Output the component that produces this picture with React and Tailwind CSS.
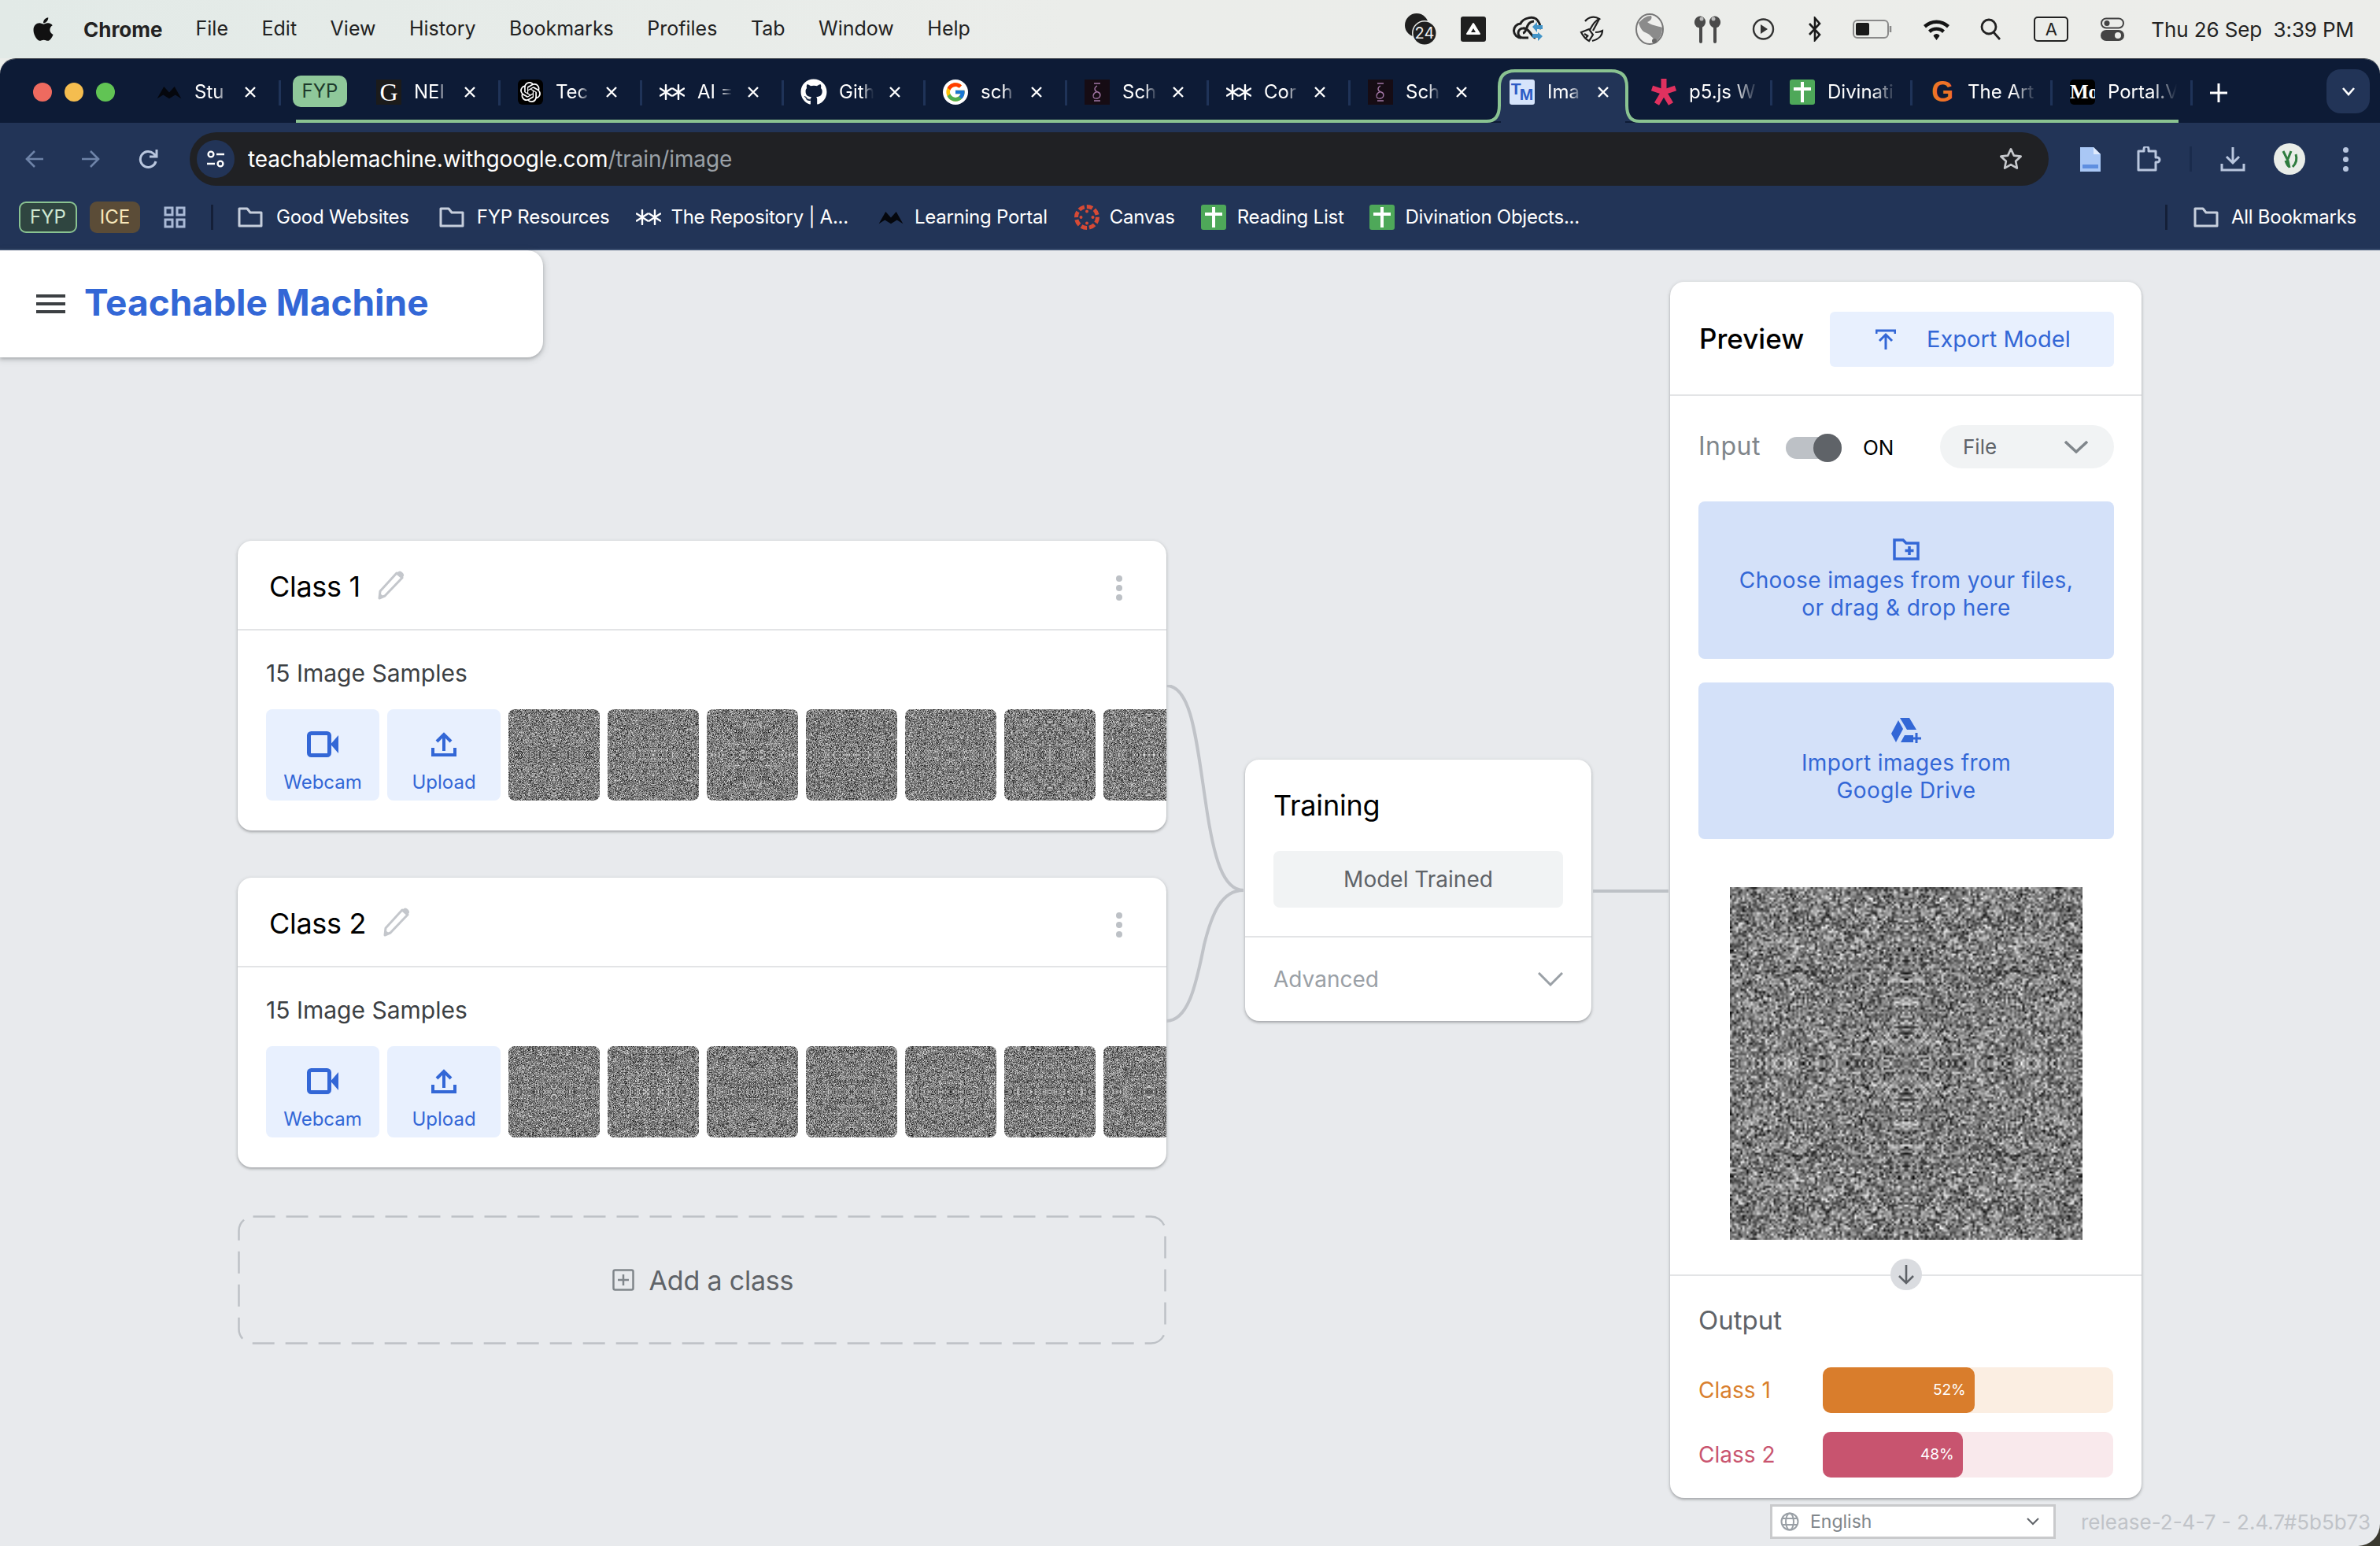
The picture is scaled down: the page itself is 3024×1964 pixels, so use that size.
import React, { useEffect, useRef } from 'react';
import { FaApple, FaGithub } from 'react-icons/fa';
import { FcGoogle } from 'react-icons/fc';
import { SiOpenai } from 'react-icons/si';

function rng(seed) {
  let a = seed >>> 0;
  return () => {
    a = (a + 0x6d2b79f5) >>> 0;
    let t = a;
    t = Math.imul(t ^ (t >>> 15), t | 1);
    t ^= t + Math.imul(t ^ (t >>> 7), t | 61);
    return ((t ^ (t >>> 14)) >>> 0) / 4294967296;
  };
}

function Noise({ seed, res, amp, className }) {
  const ref = useRef(null);
  useEffect(() => {
    const c = ref.current;
    const ctx = c.getContext('2d');
    const img = ctx.createImageData(res, res);
    const r = rng(seed);
    const half = Math.ceil(res / 2);
    const vals = [];
    for (let y = 0; y < half; y++) {
      vals[y] = [];
      for (let x = 0; x < half; x++) {
        vals[y][x] = 126 + (r() + r() - 1) * amp;
      }
    }
    for (let y = 0; y < res; y++) {
      for (let x = 0; x < res; x++) {
        const yy = y < half ? y : res - 1 - y;
        const xx = x < half ? x : res - 1 - x;
        const v = vals[yy][xx];
        const i = (y * res + x) * 4;
        img.data[i] = v;
        img.data[i + 1] = v;
        img.data[i + 2] = v;
        img.data[i + 3] = 255;
      }
    }
    ctx.putImageData(img, 0, 0);
  }, [seed, res, amp]);
  return <canvas ref={ref} width={res} height={res} className={className} />;
}

const Stars = ({ w = 32, c = 'white' }) => (
  <svg width={w} height={w * 0.625} viewBox="0 0 32 20" stroke={c} strokeWidth="2.4" strokeLinecap="round">
    <path d="M8 1v18M1 5.500l14 9M1 14.500l14-9" />
    <path d="M24 1v18M17 5.500l14 9M17 14.500l14-9" />
  </svg>
);
const Mountain = ({ w = 32 }) => (
  <svg width={w} height={w * 0.6} viewBox="0 0 32 20" fill="#05070d">
    <path d="M0 19 L9 3 L16 11 L23 3 L32 19 L24 14 L16 19 L8 14 Z" />
  </svg>
);
const GIcon = () => (
  <div className="w-[32px] h-[32px] bg-[#1b1b1b] flex items-center justify-center text-white text-[32px] leading-none font-['Liberation_Serif',serif]">G</div>
);
const Gpt = () => (
  <div className="w-[32px] h-[32px] rounded-[6px] bg-black flex items-center justify-center text-white"><SiOpenai size={26} /></div>
);
const Sch = () => (
  <svg width="32" height="32" viewBox="0 0 32 32">
    <rect width="32" height="32" fill="#160c14" />
    <path d="M12 5h8M16 8c-5 3-3 7 1 8s4 7-1 8-6-3-4-6 7-3 8 1M12 27h8" fill="none" stroke="#a377a6" strokeWidth="1.4" />
  </svg>
);
const Tm = () => (
  <div className="w-[32px] h-[32px] rounded-[3px] bg-[#d6e4fb] flex items-start justify-center overflow-hidden text-[#2d5bc4] font-bold font-['Liberation_Sans',sans-serif] leading-none">
    <span className="text-[21px] mt-[1px]">T</span><span className="text-[21px] mt-[8px] -ml-[2px]">M</span>
  </div>
);
const P5 = () => (
  <svg width="32" height="36" viewBox="0 0 32 36" stroke="#e0315f" strokeWidth="7">
    <path d="M16 1v17M16 18L1 13M16 18L31 13M16 18L7 33M16 18L25 33" />
  </svg>
);
const GreenDoc = () => (
  <svg width="32" height="32" viewBox="0 0 32 32">
    <rect width="32" height="32" rx="3" fill="#4ea859" />
    <path d="M16 3v26M5 12h22" stroke="white" strokeWidth="4" />
  </svg>
);
const OrangeG = () => (
  <div className="w-[32px] h-[32px] flex items-center justify-center text-[#ee7326] text-[36px] font-extrabold leading-none font-['Liberation_Sans',sans-serif]">G</div>
);
const Mo = () => (
  <div className="w-[32px] h-[32px] rounded-[5px] bg-black overflow-hidden text-white text-[25px] font-bold leading-[32px] font-['Liberation_Serif',serif] whitespace-nowrap">Mo</div>
);
const CanvasIcon = () => (
  <svg width="32" height="32" viewBox="0 0 32 32" fill="#d64a35">
    <circle cx="16" cy="16" r="13.500" fill="none" stroke="#d64a35" strokeWidth="5" strokeDasharray="7.500 3" />
    <circle cx="16" cy="8.500" r="2" /><circle cx="23.500" cy="16" r="2" /><circle cx="16" cy="23.500" r="2" /><circle cx="8.500" cy="16" r="2" />
  </svg>
);
const Folder = () => (
  <svg width="32" height="26" viewBox="0 0 32 26" fill="none" stroke="#c6cedc" strokeWidth="3">
    <path d="M2 24V2h10l4 5h14v17z" strokeLinejoin="round" />
  </svg>
);

function X() {
  return <span className="ml-[16px] w-[22px] flex justify-center">
    <svg width="16" height="16" viewBox="0 0 16 16" stroke="white" strokeWidth="2.4"><path d="M2 2l12 12M14 2L2 14" /></svg>
  </span>;
}

function Tab({ icon, text, w = 'w-[180px]', tw = 'w-[44px]', close = true, sep = true, active = false }) {
  return (
    <div className={`${w} h-[81px] shrink-0 relative flex items-center pt-[3px]`}>
      {active && (
        <svg className="absolute left-[-11px] top-[13px]" width="202" height="68" viewBox="0 0 202 68">
          <path d="M0 66 H4 Q20 66 20 46 V22 Q20 2 40 2 H162 Q182 2 182 22 V46 Q182 66 198 66 H202" fill="#223457" stroke="#8ac391" strokeWidth="4" />
          <rect x="22" y="62" width="158" height="6" fill="#223457" />
        </svg>
      )}
      <span className="relative ml-[22px] w-[32px] h-[36px] flex items-center justify-center shrink-0">{icon}</span>
      <span className={`relative ml-[16px] ${tw} overflow-hidden whitespace-nowrap text-white text-[24px] [mask-image:linear-gradient(to_right,black_65%,transparent)]`}>{text}</span>
      {close && <span className="relative flex"><X /></span>}
      {sep && <span className="absolute right-0 top-[27px] w-[3px] h-[32px] bg-[#1f3358]" />}
    </div>
  );
}

function TabStrip() {
  return (
    <div className="h-[81px] bg-[#0d1b36] flex relative">
      <div className="w-[177px] shrink-0 flex items-center pl-[42px] gap-[16px] pt-[3px]">
        <span className="w-[24px] h-[24px] rounded-full bg-[#ee6a5f]" />
        <span className="w-[24px] h-[24px] rounded-full bg-[#f5bd4f]" />
        <span className="w-[24px] h-[24px] rounded-full bg-[#61c454]" />
      </div>
      <Tab icon={<Mountain />} text="Stu" />
      <div className="ml-[15px] mr-[15px] mt-[21px] w-[69px] h-[40px] rounded-[10px] bg-[#8fc89a] flex items-center justify-center text-[#1d3a2b] text-[24px]">FYP</div>
      <Tab icon={<GIcon />} text="NEI" />
      <Tab icon={<Gpt />} text="Tec" />
      <Tab icon={<Stars />} text="AI =" />
      <Tab icon={<span className="text-white"><FaGithub size={34} /></span>} text="Gith" />
      <Tab icon={<span className="w-[32px] h-[32px] rounded-full bg-white flex items-center justify-center"><FcGoogle size={28} /></span>} text="sch" />
      <Tab icon={<Sch />} text="Sch" />
      <Tab icon={<Stars />} text="Cor" />
      <Tab icon={<Sch />} text="Sch" sep={false} />
      <Tab icon={<Tm />} text="Ima" sep={false} active />
      <Tab icon={<P5 />} text="p5.js W" w="w-[176px]" tw="w-[88px]" close={false} />
      <Tab icon={<GreenDoc />} text="Divinati" w="w-[178px]" tw="w-[88px]" close={false} />
      <Tab icon={<OrangeG />} text="The Art" w="w-[178px]" tw="w-[88px]" close={false} />
      <Tab icon={<Mo />} text="Portal.V" w="w-[178px]" tw="w-[88px]" close={false} />
      <svg className="ml-[22px] mt-[29px]" width="22" height="28" viewBox="0 0 22 28" stroke="white" strokeWidth="3"><path d="M11 2v24M0 14h22" /></svg>
      <div className="ml-[126px] mt-[13px] w-[55px] h-[56px] rounded-[18px] bg-[#223457] flex items-center justify-center">
        <svg width="18" height="12" viewBox="0 0 18 12" fill="none" stroke="white" strokeWidth="2.6"><path d="M2 2l7 8 7-8" /></svg>
      </div>
      <div className="absolute left-[376px] w-[1509px] bottom-0 h-[4px] bg-[#8ac391]" />
      <div className="absolute left-[2087px] w-[681px] bottom-0 h-[4px] bg-[#8ac391]" />
    </div>
  );
}

function Toolbar() {
  return (
    <div className="h-[80px] bg-[#223457] flex items-start pt-[12px]">
      <div className="w-[241px] h-[68px] shrink-0 flex items-center pl-[32px]">
        <svg width="24" height="24" viewBox="0 0 24 24" fill="none" stroke="#6e83a8" strokeWidth="2.6"><path d="M23 12H3M12 2L2 12l10 10" /></svg>
        <svg className="ml-[47px]" width="24" height="24" viewBox="0 0 24 24" fill="none" stroke="#6e83a8" strokeWidth="2.6"><path d="M1 12h20M12 2l10 10-10 10" /></svg>
        <svg className="ml-[49px]" width="26" height="28" viewBox="0 0 26 28" fill="none" stroke="#b9c6de" strokeWidth="3"><path d="M22 17a10 10 0 1 1-3-10l4 4M23 2v9h-9" /></svg>
      </div>
      <div className="w-[2362px] h-[68px] shrink-0 rounded-full bg-[#202124] flex items-center pl-[9px]">
        <span className="w-[48px] h-[48px] rounded-full bg-[#223457] flex items-center justify-center">
          <svg width="26" height="26" viewBox="0 0 26 26" fill="none" stroke="white" strokeWidth="2.4"><circle cx="7" cy="7" r="3.4" /><path d="M14 7h10M2 19h10" /><circle cx="19" cy="19" r="3.4" /></svg>
        </span>
        <span className="ml-[17px] text-white text-[28px] tracking-[-0.15px] whitespace-nowrap">teachablemachine.withgoogle.com<span className="text-[#9aa0a6]">/train/image</span></span>
        <svg className="ml-auto mr-[32px]" width="32" height="32" viewBox="0 0 24 24" fill="none" stroke="#c6c8cc" strokeWidth="2"><path d="M12 2.5l2.9 6.2 6.6.8-4.9 4.6 1.3 6.6L12 17.4 6.1 20.7l1.3-6.6L2.5 9.5l6.6-.8z" strokeLinejoin="round" /></svg>
      </div>
      <div className="h-[68px] flex items-center pl-[40px]">
        <svg width="26" height="32" viewBox="0 0 26 32">
          <path d="M0 1h17l9 9v22H0z" fill="#a9c7f5" /><path d="M17 1l9 9h-9z" fill="#dfeafc" /><rect x="3" y="23" width="20" height="5" fill="#5f8fe0" />
        </svg>
        <svg className="ml-[45px]" width="32" height="32" viewBox="0 0 32 32" fill="none" stroke="#b9c6de" strokeWidth="3"><path d="M3 6h7V3a3 3 0 0 1 6 0v3h9v8h2a3 3 0 0 1 0 6h-2v10H3z" strokeLinejoin="round" /></svg>
        <span className="ml-[36px] w-[3px] h-[32px] bg-[#1a2b4c]" />
        <svg className="ml-[36px]" width="32" height="32" viewBox="0 0 32 32" fill="none" stroke="#b9c6de" strokeWidth="3"><path d="M16 1v20M8 13l8 8 8-8" /><path d="M2 22v8h28v-8" /></svg>
        <span className="ml-[36px] w-[40px] h-[40px] rounded-full bg-[#e9ede8] flex items-center justify-center">
          <svg width="28" height="28" viewBox="0 0 28 28" fill="none" stroke="#2f7d3f" strokeWidth="3"><path d="M6 4l6 12 2 9M12 14l4-10M18 24c4-4 6-10 4-16M14 24c-3-1-4-5-5-8" /></svg>
        </span>
        <span className="ml-[48px] flex flex-col gap-[5px]">
          <span className="w-[7px] h-[7px] rounded-full bg-[#b9c6de]" /><span className="w-[7px] h-[7px] rounded-full bg-[#b9c6de]" /><span className="w-[7px] h-[7px] rounded-full bg-[#b9c6de]" />
        </span>
      </div>
    </div>
  );
}

function BM({ icon, text, ml, gap = 'ml-[16px]' }) {
  return (
    <div className={`flex items-center shrink-0 ${ml}`}>
      {icon}
      <span className={`${gap} text-white text-[24px] tracking-[-0.25px] whitespace-nowrap`}>{text}</span>
    </div>
  );
}

function Bookmarks() {
  return (
    <div className="h-[82px] bg-[#223457] border-b-[2px] border-[#3c4f70] flex items-center pl-[24px]">
      <div className="w-[74px] h-[40px] rounded-[9px] border-[2px] border-[#8ac391] bg-[#2f4540] text-[#cfe8d2] text-[24px] flex items-center justify-center">FYP</div>
      <div className="ml-[16px] w-[64px] h-[40px] rounded-[9px] bg-[#5b4c37] text-[#f8e8bc] text-[24px] flex items-center justify-center">ICE</div>
      <svg className="ml-[30px]" width="28" height="28" viewBox="0 0 28 28" fill="none" stroke="#a9b9d6" strokeWidth="3"><rect x="2" y="2" width="9" height="9" /><rect x="17" y="2" width="9" height="9" /><rect x="2" y="17" width="9" height="9" /><rect x="17" y="17" width="9" height="9" /></svg>
      <span className="ml-[32px] w-[3px] h-[32px] bg-[#141f38]" />
      <BM ml="ml-[31px]" icon={<Folder />} text="Good Websites" gap="ml-[17px]" />
      <BM ml="ml-[38px]" icon={<Folder />} text="FYP Resources" />
      <BM ml="ml-[34px]" icon={<Stars />} text="The Repository | A..." gap="ml-[12px]" />
      <BM ml="ml-[38px]" icon={<Mountain />} text="Learning Portal" gap="ml-[14px]" />
      <BM ml="ml-[34px]" icon={<CanvasIcon />} text="Canvas" gap="ml-[13px]" />
      <BM ml="ml-[33px]" icon={<GreenDoc />} text="Reading List" gap="ml-[14px]" />
      <BM ml="ml-[33px]" icon={<GreenDoc />} text="Divination Objects..." gap="ml-[13px]" />
      <span className="ml-auto w-[3px] h-[32px] bg-[#141f38]" />
      <BM ml="ml-[33px] mr-[30px]" icon={<Folder />} text="All Bookmarks" />
    </div>
  );
}

function MenuBar() {
  const items = ['File', 'Edit', 'View', 'History', 'Bookmarks', 'Profiles', 'Tab', 'Window', 'Help'];
  const ink = '#1f1f1f';
  return (
    <div className="h-[74px] bg-[linear-gradient(to_right,#e2eae7,#ebedea_45%,#ecedea)] flex items-center text-[#222] text-[26px] relative">
      <span className="ml-[38px] text-[#111]"><FaApple size={34} /></span>
      <span className="ml-[34px] font-bold">Chrome</span>
      <div className="flex gap-[42.500px] ml-[42px] text-[25px]">{items.map((m) => <span key={m}>{m}</span>)}</div>
      <div className="ml-auto flex items-center pr-[33px]">
        <svg width="44" height="40" viewBox="0 0 44 40">
          <circle cx="16" cy="15" r="15" fill={ink} />
          <circle cx="26" cy="25" r="16" fill="#ebedea" />
          <circle cx="26" cy="25" r="14.5" fill={ink} />
          <text x="26" y="32" textAnchor="middle" fontSize="20" fill="#eee" fontFamily="Inter">24</text>
        </svg>
        <svg className="ml-[28px]" width="32" height="32" viewBox="0 0 32 32">
          <rect width="32" height="32" rx="3" fill={ink} />
          <path d="M16 9l8 13H8z" fill="white" stroke="white" strokeWidth="2" strokeLinejoin="round" />
          <path d="M16 15l-3 5h6z" fill={ink} />
        </svg>
        <svg className="ml-[34px]" width="44" height="40" viewBox="0 0 44 40" fill="none">
          <path d="M11 31a9 9 0 0 1-1-18c3-7 18-12 23-2 2 3 2 7 1 9" stroke={ink} strokeWidth="3" />
          <path d="M20 31h-7a6 6 0 0 1 0-12c5-1 8 4 11 8 2 3 3 4 5 4M13 25c6-1 3-14 14-15" stroke={ink} strokeWidth="3" />
          <path d="M25 17l6-6v4h7v5h-7v4z M32 24l6 5-6 6v-4h-7v-5h7z" fill="#4294c8" />
        </svg>
        <svg className="ml-[40px]" width="32" height="36" viewBox="0 0 32 36" fill="none" stroke={ink} strokeWidth="2.2">
          <path d="M8 8a13 13 0 0 1 18-3c-5 2-9 8-12 14" />
          <path d="M26 5l-8 15" />
          <path d="M3 22l10-4 5 7-5 8c-4-2-7-5-10-11z" />
          <path d="M21 22c4 0 7-1 9-2 0 6-5 11-13 13" />
          <path d="M7 24l5 3M9 29l3-3" />
        </svg>
        <svg className="ml-[40px]" width="36" height="40" viewBox="0 0 36 40">
          <ellipse cx="18" cy="20" rx="17" ry="19" fill="#efefed" stroke="#777" strokeWidth="2" />
          <path d="M4 12c6-6 10-9 16-9 2 4-2 7-5 8 4 4 14 5 19 7 0 8-3 14-8 18-4-5-8-10-14-12C8 22 6 18 4 12z" fill="#8b8b8b" />
          <circle cx="24" cy="35" r="3" fill="#666" />
        </svg>
        <svg className="ml-[36px]" width="40" height="36" viewBox="0 0 40 36" fill="#4a4a4a">
          <rect x="9" y="14" width="4" height="22" rx="2" /><ellipse cx="10" cy="9" rx="7" ry="7.500" transform="rotate(20 10 9)" />
          <rect x="27" y="14" width="4" height="22" rx="2" /><ellipse cx="29" cy="9" rx="7" ry="7.500" transform="rotate(-20 29 9)" />
          <circle cx="12" cy="5" r="2.500" fill="#bbb" /><circle cx="27" cy="5" r="2.500" fill="#bbb" />
        </svg>
        <svg className="ml-[36px]" width="29" height="28" viewBox="0 0 29 28" fill="none">
          <circle cx="14.5" cy="14" r="12.5" stroke="#333" strokeWidth="2.4" /><path d="M11 8l9 6-9 6z" fill="#333" />
        </svg>
        <svg className="ml-[41px]" width="20" height="32" viewBox="0 0 20 32" fill="none" stroke="#1a1a1a" strokeWidth="2.6"><path d="M3 9l13 14-6 7V2l6 7L3 23" /></svg>
        <svg className="ml-[38px]" width="50" height="24" viewBox="0 0 50 24" fill="none">
          <rect x="1" y="1" width="44" height="22" rx="5" stroke="#8a8a8a" strokeWidth="2" />
          <rect x="4" y="4" width="17" height="16" rx="2" fill="#1a1a1a" />
          <path d="M48 8v8" stroke="#8a8a8a" strokeWidth="2.5" />
        </svg>
        <svg className="ml-[39px]" width="35" height="28" viewBox="0 0 35 28">
          <path d="M1 9a24 24 0 0 1 33 0l-3 3.6a19 19 0 0 0-27 0zM7 15.500a15.500 15.500 0 0 1 21 0l-3 3.500a10.500 10.500 0 0 0-15 0zM17.500 20a4 4 0 0 1 4 2.500L17.500 28l-4-5.500a4 4 0 0 1 4-2.500z" fill="#141414" />
        </svg>
        <svg className="ml-[38px]" width="26" height="28" viewBox="0 0 26 28" fill="none" stroke="#222" strokeWidth="2.8"><circle cx="11" cy="11" r="9" /><path d="M17 18l8 9" /></svg>
        <div className="ml-[42px] w-[44px] h-[32px] rounded-[5px] border-[2px] border-[#222] flex items-center justify-center text-[22px] leading-none">A</div>
        <svg className="ml-[41px]" width="30" height="30" viewBox="0 0 30 30">
          <rect x="1" y="1.500" width="28" height="12" rx="6" fill="none" stroke="#444" strokeWidth="2" />
          <circle cx="8" cy="7.500" r="3.500" fill="#444" />
          <rect y="16" width="30" height="14" rx="7" fill="#444" />
          <circle cx="22" cy="23" r="4" fill="#ecedea" />
        </svg>
        <span className="ml-[34px] whitespace-nowrap text-[26px] tracking-[-0.1px]">Thu 26 Sep&nbsp;&nbsp;3:39 PM</span>
      </div>
    </div>
  );
}

function Pencil() {
  return (
    <svg width="38" height="38" viewBox="0 0 38 38" fill="none">
      <path d="M2 36l1-9L24 4l7 6L9 33z" stroke="#c4c7cc" strokeWidth="3" strokeLinejoin="round" />
      <path d="M25 3c2-2 4-2 6 0s3 4 1 6l-2 1-7-6z" fill="#c4c7cc" />
      <path d="M2 36l1-6 5 4z" fill="#c4c7cc" />
    </svg>
  );
}

function SampleButton({ icon, label }) {
  return (
    <div className="w-[144px] h-[116px] shrink-0 rounded-[8px] bg-[#e8f0fe] flex flex-col items-center pt-[28px]">
      <div className="h-[33px] flex items-center justify-center">{icon}</div>
      <span className="mt-[17px] text-[24px] leading-[30px] text-[#3367d6]">{label}</span>
    </div>
  );
}

function ClassCard({ name, seed }) {
  const thumbs = [0, 1, 2, 3, 4, 5, 6];
  return (
    <div className="h-[368px] rounded-[18px] bg-white shadow-[0_2px_3px_rgba(60,64,67,0.3),0_1px_4px_1px_rgba(60,64,67,0.12)] overflow-hidden flex flex-col">
      <div className="h-[114px] border-b-[2px] border-[#e3e4e6] flex items-center pl-[40px] relative">
        <span className="text-[36px] text-black leading-none tracking-[-0.3px] mt-[4px]">{name}</span>
        <span className="ml-[22px] -mt-[1px]"><Pencil /></span>
        <span className="absolute left-[1116px] top-[44px] flex flex-col gap-[4px]">
          <span className="w-[8px] h-[8px] rounded-full bg-[#bdc1c6]" /><span className="w-[8px] h-[8px] rounded-full bg-[#bdc1c6]" /><span className="w-[8px] h-[8px] rounded-full bg-[#bdc1c6]" />
        </span>
      </div>
      <div className="pl-[36px] pt-[36px]">
        <div className="text-[30px] leading-[36px] text-[#3c4043]">15 Image Samples</div>
        <div className="mt-[28px] flex">
          <SampleButton label="Webcam" icon={
            <svg width="40" height="33" viewBox="0 0 40 33" fill="none"><rect x="2.500" y="2.500" width="26" height="28" rx="3" stroke="#3367d6" strokeWidth="5" /><path d="M30 16.500L40 5v23z" fill="#3367d6" /></svg>
          } />
          <span className="w-[10px] shrink-0" />
          <SampleButton label="Upload" icon={
            <svg width="32" height="32" viewBox="0 0 32 32" fill="none" stroke="#3367d6" strokeWidth="4"><path d="M2 20v9h28v-9" /><path d="M16 24V3" /><path d="M7 12l9-9 9 9" /></svg>
          } />
          <span className="w-[10px] shrink-0" />
          <div className="flex gap-[10px]">
            {thumbs.map((t) => (
              <Noise key={t} seed={seed + t * 17} res={116} amp={115} className="w-[116px] h-[116px] shrink-0 rounded-[8px]" />
            ))}
          </div>
        </div>
      </div>
    </div>
  );
}

function Connectors() {
  return (
    <svg className="absolute left-[1482px] top-[183px]" width="100" height="430" viewBox="0 0 100 430" fill="none" stroke="#c0c3c8" strokeWidth="4">
      <path d="M0 1C32 1 38 70 50 150C60 220 72 261 98 261" />
      <path d="M0 427C28 427 38 380 48 330C58 290 70 261 98 261" />
    </svg>
  );
}

function Training() {
  return (
    <div className="mt-[278px] w-[440px] h-[332px] rounded-[18px] bg-white shadow-[0_2px_3px_rgba(60,64,67,0.3),0_1px_4px_1px_rgba(60,64,67,0.12)] flex flex-col">
      <div className="px-[36px] pt-[34px]">
        <div className="text-[36px] leading-[48px] text-black tracking-[-0.2px]">Training</div>
        <div className="mt-[34px] h-[72px] rounded-[8px] bg-[#f1f3f4] flex items-center justify-center text-[28px] text-[#5f6368]">Model Trained</div>
      </div>
      <div className="mt-[36px] border-t-[2px] border-[#e3e4e6] px-[36px] h-[107px] flex items-center justify-between">
        <span className="text-[28px] text-[#9aa0a6]">Advanced</span>
        <svg width="32" height="18" viewBox="0 0 32 18" fill="none" stroke="#9aa0a6" strokeWidth="3"><path d="M1 1l15 15L31 1" /></svg>
      </div>
    </div>
  );
}

function Bar({ label, text, fill, track, pct, fw, mt }) {
  return (
    <div className={`flex items-center ${mt}`}>
      <span className={`w-[158px] text-[28px] ${text}`}>{label}</span>
      <div className={`w-[370px] h-[58px] rounded-[10px] ${track}`}>
        <div className={`${fw} h-full rounded-[10px] ${fill} flex items-center justify-end pr-[11px] text-white text-[19px]`}>{pct}</div>
      </div>
    </div>
  );
}

function Preview() {
  return (
    <div className="w-[599px] h-[1545px] rounded-[18px] bg-white shadow-[0_2px_3px_rgba(60,64,67,0.3),0_1px_4px_1px_rgba(60,64,67,0.12)] flex flex-col">
      <div className="h-[145px] pt-[2px] border-b-[2px] border-[#e3e4e6] flex items-center pl-[37px]">
        <span className="w-[166px] text-[35px] font-medium text-black">Preview</span>
        <div className="w-[361px] h-[70px] rounded-[6px] bg-[#e8f0fe] flex items-center pl-[58px] text-[#3367d6] text-[29px]">
          <svg width="26" height="26" viewBox="0 0 26 26" fill="none" stroke="#3367d6" strokeWidth="3"><path d="M1 6V2h24v4" /><path d="M13 26V8M5 15l8-8 8 8" /></svg>
          <span className="ml-[39px]">Export Model</span>
        </div>
      </div>
      <div className="pl-[36px] pr-[35px]">
        <div className="mt-[37px] h-[55px] flex items-center">
          <span className="text-[32px] text-[#80868b] tracking-[0.5px] -mt-[2px]">Input</span>
          <div className="ml-[32px] w-[71px] h-[28px] mt-[2px] rounded-full bg-[#bdc1c6] flex items-center justify-end">
            <span className="w-[36px] h-[36px] rounded-full bg-[#5f6368]" />
          </div>
          <span className="ml-[27px] text-[26px] text-black mt-[2px]">ON</span>
          <div className="ml-auto w-[221px] h-[55px] rounded-full bg-[#f1f3f4] flex items-center pl-[29px] pr-[33px] justify-between">
            <span className="text-[26px] text-[#5f6368]">File</span>
            <svg width="30" height="16" viewBox="0 0 30 16" fill="none" stroke="#80868b" strokeWidth="3.500"><path d="M1 1l14 13L29 1" /></svg>
          </div>
        </div>
        <div className="mt-[42px] h-[200px] rounded-[8px] bg-[#d4e1f9] flex flex-col items-center pt-[47px] text-[#3367d6] text-[28px] leading-[35px] tracking-[0.4px] text-center">
          <svg width="34" height="28" viewBox="0 0 34 28" fill="none"><path d="M2 26V2h11l4 4h15v20z" stroke="#3367d6" strokeWidth="3.500" /><path d="M21 10v11M15.500 15.500h11" stroke="#3367d6" strokeWidth="3.500" /></svg>
          <div className="mt-[8px]">Choose images from your files,<br />or drag &amp; drop here</div>
        </div>
        <div className="mt-[30px] h-[199px] rounded-[8px] bg-[#d4e1f9] flex flex-col items-center pt-[45px] text-[#3367d6] text-[28px] leading-[35px] tracking-[0.4px] text-center">
          <svg width="38" height="32" viewBox="0 0 38 32" fill="#3367d6"><path d="M11 0h12l9 15H20z" /><path d="M9 3l6 11L6 31 0 20z" /><path d="M12 31l5-9h11v9z" /><path d="M32 19v13M26 26h12" stroke="#3367d6" strokeWidth="3" /></svg>
          <div className="mt-[8px]">Import images from<br />Google Drive</div>
        </div>
        <div className="mt-[61px] flex justify-center">
          <Noise seed={4242} res={170} amp={130} className="w-[448px] h-[448px]" />
        </div>
      </div>
      <div className="mt-[44px] relative border-b-[2px] border-[#e3e4e6]">
        <div className="absolute left-[280px] -top-[20px] w-[40px] h-[40px] rounded-full bg-[#dadce0] flex items-center justify-center">
          <svg width="24" height="26" viewBox="0 0 24 26" fill="none" stroke="#5f6368" strokeWidth="2.600"><path d="M12 1v23M3 15l9 9 9-9" /></svg>
        </div>
      </div>
      <div className="px-[36px] pt-[34px]">
        <div className="text-[33px] leading-[44px] text-[#5f6368]">Output</div>
        <Bar mt="mt-[38px]" label="Class 1" text="text-[#d97f2e]" fill="bg-[#d97d2c]" track="bg-[#fbeee2]" pct="52%" fw="w-[193px]" />
        <Bar mt="mt-[24px]" label="Class 2" text="text-[#c9556f]" fill="bg-[#c8546f]" track="bg-[#f9e9ec]" pct="48%" fw="w-[178px]" />
      </div>
    </div>
  );
}

function Page() {
  return (
    <div className="flex-1 bg-[#e8eaed] flex">
      <div className="w-[2122px] shrink-0 flex flex-col">
        <div className="w-[690px] h-[136px] rounded-br-[20px] rounded-tr-[20px] bg-white shadow-[0_2px_4px_rgba(60,64,67,0.3),0_2px_8px_2px_rgba(60,64,67,0.12)] flex items-center pl-[46px]">
          <svg width="37" height="24" viewBox="0 0 37 24" fill="#3c4043"><rect width="37" height="4" /><rect y="10" width="37" height="4" /><rect y="20" width="37" height="4" /></svg>
          <span className="ml-[24px] -mt-[4px] text-[46px] font-bold text-[#3367d6]">Teachable Machine</span>
        </div>
        <div className="mt-[233px] pl-[302px] flex relative">
          <div className="w-[1180px] shrink-0 flex flex-col">
            <ClassCard name="Class 1" seed={11} />
            <div className="h-[60px]" />
            <ClassCard name="Class 2" seed={311} />
            <div className="mt-[61px] h-[164px] relative flex items-center justify-center text-[#5f6368]">
              <svg className="absolute inset-0" width="1180" height="164" viewBox="0 0 1180 164" fill="none" stroke="#bdc1c6" strokeWidth="2.500" strokeDasharray="28 14"><rect x="1.500" y="1.500" width="1177" height="161" rx="18" /></svg>
              <svg className="ml-[2px]" width="28" height="28" viewBox="0 0 28 28" fill="none" stroke="#80868b" strokeWidth="2.500"><rect x="1.500" y="1.500" width="25" height="25" rx="2" /><path d="M14 7v14M7 14h14" /></svg>
              <span className="ml-[19px] text-[34px] tracking-[-0.2px]">Add a class</span>
            </div>
          </div>
          <Connectors />
          <div className="ml-[100px] shrink-0">
            <Training />
          </div>
          <div className="ml-[2px] mt-[443px] w-[96px] h-[4px] bg-[#bdc1c6]" />
        </div>
      </div>
      <div className="flex-1 pt-[40px] pl-0 flex flex-col">
        <Preview />
        <div className="mt-[8px] flex items-center pl-[127px]">
          <div className="w-[363px] h-[44px] border-[3px] border-[#c9cacc] bg-white flex items-center pl-[10px] pr-[18px]">
            <svg width="24" height="24" viewBox="0 0 24 24" fill="none" stroke="#9aa0a6" strokeWidth="2"><circle cx="12" cy="12" r="10.500" /><ellipse cx="12" cy="12" rx="5" ry="10.500" /><path d="M2 8h20M2 16h20" /></svg>
            <span className="ml-[14px] text-[23px] text-[#80868b]">English</span>
            <svg className="ml-auto" width="16" height="10" viewBox="0 0 16 10" fill="none" stroke="#5f6368" strokeWidth="2"><path d="M1 1l7 7 7-7" /></svg>
          </div>
          <span className="ml-[32px] text-[26px] text-[#c0c3c8] whitespace-nowrap">release-2-4-7 - 2.4.7#5b5b73</span>
        </div>
      </div>
    </div>
  );
}

export default function App() {
  return (
    <div className="w-[3024px] h-[1964px] overflow-hidden flex flex-col font-['Inter',sans-serif] bg-[linear-gradient(#ebedea_50%,#3b3a30_50%)]">
      <MenuBar />
      <div className="flex-1 flex flex-col rounded-t-[20px] rounded-br-[28px] overflow-hidden border-t-[1px] border-[#3a3f48]">
        <TabStrip />
        <Toolbar />
        <Bookmarks />
        <Page />
      </div>
    </div>
  );
}
